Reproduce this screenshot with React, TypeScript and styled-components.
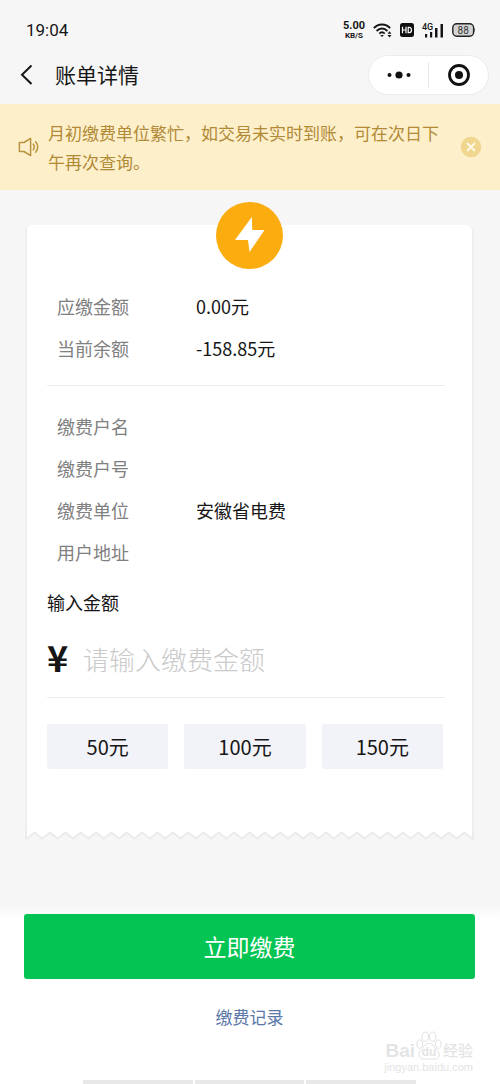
import React, { useState } from 'react';
import styled, { createGlobalStyle } from 'styled-components';

const GlobalStyle = createGlobalStyle`
  * { box-sizing: border-box; }
  body {
    margin: 0;
    background: #fff;
    font-family: "Noto Sans CJK SC", "Noto Sans", sans-serif;
    color: #161616;
  }
  button, input { font-family: inherit; color: inherit; }
  button { border: 0; padding: 0; cursor: pointer; }
`;

const Page = styled.div`
  position: relative;
  display: flex;
  flex-direction: column;
  min-height: 100vh;
  background: #f6f6f6;
  overflow: hidden;
`;

const StatusBar = styled.div`
  display: flex;
  align-items: center;
  justify-content: space-between;
  height: 46px;
  padding: 14px 24px 0 26px;
`;

const Clock = styled.time`
  font-family: Roboto, sans-serif;
  font-size: 17px;
  line-height: 20px;
`;

const StatusIcons = styled.div`
  display: flex;
  align-items: center;
  gap: 8px;
`;

const NetSpeed = styled.div`
  display: flex;
  flex-direction: column;
  align-items: center;
  font-family: Roboto, sans-serif;
  font-weight: 700;
`;

const NetValue = styled.span`
  font-size: 11px;
  line-height: 12px;
`;

const NetUnit = styled.span`
  font-size: 8px;
  line-height: 8px;
`;

const NavBar = styled.header`
  display: flex;
  align-items: center;
  height: 58px;
  padding: 0 11px 0 17px;
`;

const BackButton = styled.button`
  display: flex;
  width: 38px;
  background: none;
`;

const Title = styled.h1`
  flex: 1;
  margin: 0;
  padding-bottom: 2px;
  font-size: 21px;
  font-weight: 400;
  line-height: 30px;
`;

const Capsule = styled.div`
  display: flex;
  width: 121px;
  height: 40px;
  border: 1px solid #ececec;
  border-radius: 20px;
  background: #fff;
  align-items: center;
`;

const CapsuleButton = styled.button`
  display: flex;
  flex: 1;
  align-items: center;
  justify-content: center;
  height: 26px;
  background: none;

  & + & { border-left: 1px solid #e8e8e8; }
`;

const Notice = styled.section`
  display: flex;
  align-items: center;
  padding: 14px 18px;
  background: #feefcb;
  color: #b08a35;
`;

const NoticeText = styled.p`
  flex: 1;
  margin: 0 20px 0 8px;
  font-size: 17px;
  line-height: 29px;
`;

const CloseButton = styled.button`
  display: flex;
  background: none;
`;

const Main = styled.main`
  padding: 35px 26px 65px 25px;
`;

const Bill = styled.section`
  padding: 0 27px 62px 20px;
  border: solid #efefef;
  border-width: 0 2px;
  border-radius: 6px 6px 0 0;
  background: #fff;
`;

const BadgeRow = styled.div`
  display: flex;
  justify-content: center;
  margin-right: -7px;
`;

const Badge = styled.div`
  display: flex;
  width: 67px;
  height: 67px;
  margin-top: -23px;
  border-radius: 50%;
  background: #fbad0f;
`;

const Details = styled.dl<{ $divided?: boolean }>`
  margin: 0;
  padding: ${(p) => (p.$divided ? '16px 10px' : '19px 10px 0')};
  border-bottom: ${(p) => (p.$divided ? '1px solid #ededed' : '0')};
`;

const DetailRow = styled.div`
  display: flex;
  align-items: center;
  height: 42px;
  font-size: 18px;
`;

const Term = styled.dt`
  width: 139px;
  color: #808080;
`;

const Value = styled.dd`
  margin: 0;
`;

const AmountLabel = styled.label`
  display: block;
  margin-top: 17px;
  font-size: 18px;
  line-height: 24px;
`;

const AmountField = styled.div`
  display: flex;
  align-items: center;
  height: 84px;
  padding-top: 6px;
  border-bottom: 1px solid #ededed;
`;

const Currency = styled.span`
  width: 36px;
  padding-bottom: 5px;
  font-size: 36px;
  font-weight: 700;
  line-height: 40px;
`;

const AmountInput = styled.input`
  flex: 1;
  min-width: 0;
  height: 40px;
  padding: 0;
  border: 0;
  outline: 0;
  background: none;
  font-size: 26px;
  font-weight: 300;

  &::placeholder { color: #cacaca; opacity: 1; }
`;

const Presets = styled.div`
  display: grid;
  grid-template-columns: repeat(3, 1fr);
  gap: 16px;
  margin: 26px 2px 0 0;
`;

const Preset = styled.button`
  height: 45px;
  border-radius: 2px;
  background: #f2f3f8;
  font-size: 20px;
`;

const TornEdge = styled.svg`
  display: block;
  width: 100%;
  height: 9px;
`;

const Footer = styled.footer`
  display: flex;
  flex: 1;
  flex-direction: column;
  align-items: center;
  padding: 9px 25px 0 24px;
  background: linear-gradient(#f6f6f6, #fff 15px);
`;

const PayButton = styled.button`
  width: 100%;
  height: 65px;
  padding-bottom: 2px;
  border-radius: 3px;
  background: #04c453;
  color: #fff;
  font-size: 23px;
`;

const RecordLink = styled.a`
  margin: 24px 0;
  color: #5b76a8;
  font-size: 17px;
  line-height: 28px;
  text-decoration: none;
`;

const HomeStrips = styled.div`
  display: grid;
  grid-template-columns: repeat(3, 1fr);
  gap: 2px;
  width: 74%;
  height: 4px;
  margin-top: auto;
`;

const Strip = styled.span`
  background: #e8e8e8;
`;

const Watermark = styled.div`
  position: absolute;
  right: 27px;
  bottom: 11px;
  display: flex;
  flex-direction: column;
  align-items: flex-end;
  color: #e4e4e4;
  font-family: "Liberation Sans", "Noto Sans CJK SC", sans-serif;
  pointer-events: none;
`;

const WatermarkBrand = styled.div`
  display: flex;
  align-items: flex-end;
  font-size: 19px;
  font-weight: 700;
  line-height: 20px;
`;

const WatermarkPaw = styled.span`
  display: grid;
  justify-items: center;
  align-items: end;
  margin: 0 1px;

  > * { grid-area: 1 / 1; }
`;

const WatermarkPawText = styled.span`
  font-size: 12px;
  line-height: 18px;
`;

const WatermarkSuffix = styled.span`
  font-size: 15px;
  font-weight: 500;
`;

const WatermarkUrl = styled.span`
  font-size: 11px;
  line-height: 12px;
`;

const TEETH = 29;
const WIDTH = 449;
const tornPoints = Array.from({ length: TEETH * 2 + 1 }, (_, i) => {
  const x = 2 + (i * (WIDTH - 4)) / (TEETH * 2);
  return `${x.toFixed(2)},${i % 2 ? 1.5 : 7.5}`;
}).join(' ');

const charges = [
  ['应缴金额', '0.00元'],
  ['当前余额', '-158.85元'],
];

const account = [
  ['缴费户名', ''],
  ['缴费户号', ''],
  ['缴费单位', '安徽省电费'],
  ['用户地址', ''],
];

function WifiIcon() {
  return (
    <svg width="19" height="15" viewBox="0 0 19 15" fill="none" stroke="#161616" strokeWidth="1.9">
      <path d="M.8 5.2C5.300 .2 12.700 .2 17.200 5.200M3.600 8C6.800 4.600 11.200 4.600 14.400 8M6.300 10.600C8 9 10 9 11.700 10.600" />
      <path d="M7.200 12h3.600L9 14z" fill="#161616" stroke="none" />
      <path d="M14.500 10.800h4l-2-2.600zM14.500 12h4l-2 2.600z" fill="#161616" stroke="none" />
    </svg>
  );
}

function HdIcon() {
  return (
    <svg width="14" height="14" viewBox="0 0 14 14">
      <rect width="14" height="14" rx="2.500" fill="#111" />
      <path d="M2.500 3.700v6.600M6 3.700v6.600M2.500 7H6M8.200 4.300v5.400h1c3 0 3-5.400 0-5.400z" fill="none" stroke="#fff" strokeWidth="1.200" />
    </svg>
  );
}

function SignalIcon() {
  return (
    <svg width="22" height="15" viewBox="0 0 22 15" fill="#161616">
      <text x="0" y="7" fontFamily="Roboto, sans-serif" fontSize="9" fontWeight="500">4G</text>
      <rect x="3" y="11" width="2.200" height="3.500" />
      <rect x="8" y="9" width="2.200" height="5.500" />
      <rect x="13" y="5" width="2.500" height="9.500" />
      <rect x="18.500" y="1" width="2.500" height="13.500" />
    </svg>
  );
}

function BatteryIcon() {
  return (
    <svg width="24" height="14" viewBox="0 0 24 14">
      <rect x=".8" y=".8" width="20.800" height="12.400" rx="4" fill="#d4d4d4" stroke="#222" strokeWidth="1.400" />
      <path d="M22.300 4.500q1.600 2.500 0 5z" fill="#222" />
      <text x="11.200" y="10.500" textAnchor="middle" fontFamily="Roboto, sans-serif" fontSize="10" fill="#333">88</text>
    </svg>
  );
}

function SpeakerIcon() {
  return (
    <svg width="22" height="22" viewBox="0 0 22 22" fill="none" stroke="#b9933f" strokeWidth="1.500" strokeLinejoin="round" strokeLinecap="round">
      <path d="M1.400 6.500h4.600L12.600 2.400v17.200L6 15.500H1.400z" />
      <path d="M15.300 8.200q2 2.800 0 5.600M17.600 5.800q4.300 5.200 0 10.400" />
    </svg>
  );
}

export default function App() {
  const [amount, setAmount] = useState('');
  const [noticeOpen, setNoticeOpen] = useState(true);

  return (
    <>
      <GlobalStyle />
      <Page>
        <StatusBar>
          <Clock>19:04</Clock>
          <StatusIcons>
            <NetSpeed>
              <NetValue>5.00</NetValue>
              <NetUnit>KB/S</NetUnit>
            </NetSpeed>
            <WifiIcon />
            <HdIcon />
            <SignalIcon />
            <BatteryIcon />
          </StatusIcons>
        </StatusBar>

        <NavBar>
          <BackButton aria-label="返回">
            <svg width="18" height="22" viewBox="0 0 18 22" fill="none" stroke="#161616" strokeWidth="2">
              <path d="M14.500 1.500L5 10.700l9.500 9.300" />
            </svg>
          </BackButton>
          <Title>账单详情</Title>
          <Capsule>
            <CapsuleButton aria-label="更多">
              <svg width="24" height="8" viewBox="0 0 24 8" fill="#111">
                <circle cx="2.500" cy="4" r="2" />
                <circle cx="12" cy="4" r="3.600" />
                <circle cx="21.500" cy="4" r="2" />
              </svg>
            </CapsuleButton>
            <CapsuleButton aria-label="关闭">
              <svg width="22" height="22" viewBox="0 0 22 22">
                <circle cx="11" cy="11" r="9.500" fill="none" stroke="#111" strokeWidth="2.800" />
                <circle cx="11" cy="11" r="4" fill="#111" />
              </svg>
            </CapsuleButton>
          </Capsule>
        </NavBar>

        {noticeOpen && (
          <Notice>
            <SpeakerIcon />
            <NoticeText>月初缴费单位繁忙，如交易未实时到账，可在次日下午再次查询。</NoticeText>
            <CloseButton aria-label="关闭提示" onClick={() => setNoticeOpen(false)}>
              <svg width="22" height="22" viewBox="0 0 22 22">
                <circle cx="11" cy="11" r="10.300" fill="#f0d68e" />
                <path d="M7 7l8 8M15 7l-8 8" stroke="#fff8e6" strokeWidth="2" />
              </svg>
            </CloseButton>
          </Notice>
        )}

        <Main>
          <Bill>
            <BadgeRow>
              <Badge>
                <svg width="67" height="67" viewBox="0 0 67 67">
                  <path d="M35.800 15L36.300 28H48.500L33.500 50L32 38H19z" fill="#fff" />
                </svg>
              </Badge>
            </BadgeRow>
            <Details $divided>
              {charges.map(([term, value]) => (
                <DetailRow key={term}>
                  <Term>{term}</Term>
                  <Value>{value}</Value>
                </DetailRow>
              ))}
            </Details>
            <Details>
              {account.map(([term, value]) => (
                <DetailRow key={term}>
                  <Term>{term}</Term>
                  <Value>{value}</Value>
                </DetailRow>
              ))}
            </Details>
            <AmountLabel htmlFor="amount">输入金额</AmountLabel>
            <AmountField>
              <Currency>¥</Currency>
              <AmountInput
                id="amount"
                inputMode="decimal"
                placeholder="请输入缴费金额"
                value={amount}
                onChange={(e) => setAmount(e.target.value)}
              />
            </AmountField>
            <Presets>
              {[50, 100, 150].map((n) => (
                <Preset key={n} type="button" onClick={() => setAmount(String(n))}>
                  {n}元
                </Preset>
              ))}
            </Presets>
          </Bill>
          <TornEdge viewBox={`0 0 ${WIDTH} 9`} preserveAspectRatio="none">
            <polygon points={`2,0 ${tornPoints} ${WIDTH - 2},0`} fill="#fff" />
            <polyline points={`1,0 1,7.500 ${tornPoints} ${WIDTH - 1},7.500 ${WIDTH - 1},0`} fill="none" stroke="#ebebeb" strokeWidth="2" />
          </TornEdge>
        </Main>

        <Footer>
          <PayButton type="button">立即缴费</PayButton>
          <RecordLink href="#records">缴费记录</RecordLink>
          <HomeStrips>
            <Strip />
            <Strip />
            <Strip />
          </HomeStrips>
        </Footer>

        <Watermark>
          <WatermarkBrand>
            Bai
            <WatermarkPaw>
              <svg width="26" height="30" viewBox="0 0 28 32" fill="#fff" stroke="#dedede">
                <ellipse cx="10" cy="6" rx="3.500" ry="5" />
                <ellipse cx="18" cy="6" rx="3.500" ry="5" />
                <ellipse cx="4" cy="14" rx="3" ry="4.500" />
                <ellipse cx="24" cy="14" rx="3" ry="4.500" />
                <path d="M14 13C9 13 8 19 5 21C1 25 4 30 8 30H20C25 30 27 25 23 21C20 19 19 13 14 13z" />
              </svg>
              <WatermarkPawText>du</WatermarkPawText>
            </WatermarkPaw>
            <WatermarkSuffix>经验</WatermarkSuffix>
          </WatermarkBrand>
          <WatermarkUrl>jingyan.baidu.com</WatermarkUrl>
        </Watermark>
      </Page>
    </>
  );
}
